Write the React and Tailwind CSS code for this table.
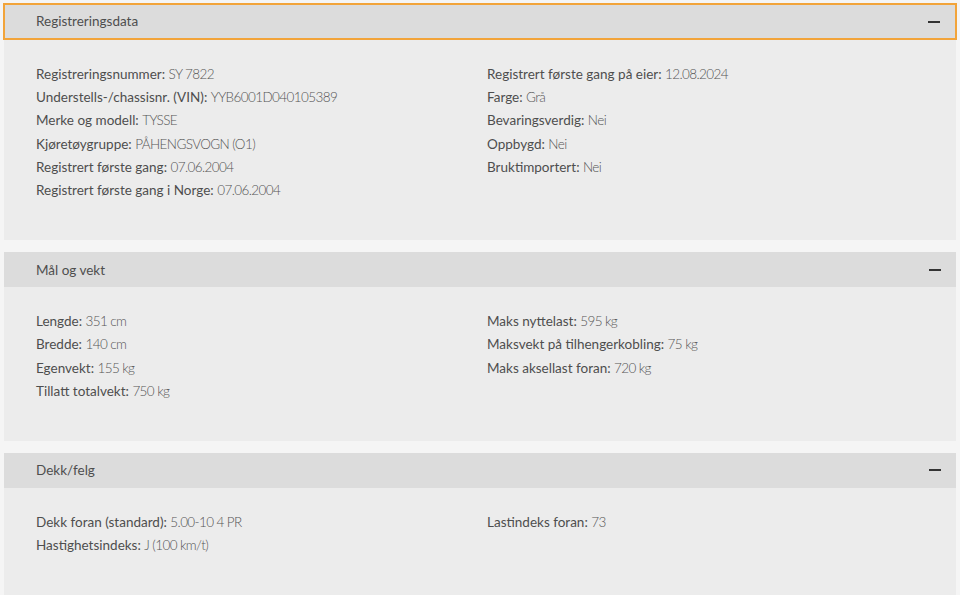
import React from "react";

const sections = [
  {
    title: "Registreringsdata",
    active: true,
    left: [
      ["Registreringsnummer", "SY 7822"],
      ["Understells-/chassisnr. (VIN)", "YYB6001D040105389"],
      ["Merke og modell", "TYSSE"],
      ["Kjøretøygruppe", "PÅHENGSVOGN (O1)"],
      ["Registrert første gang", "07.06.2004"],
      ["Registrert første gang i Norge", "07.06.2004"],
    ],
    right: [
      ["Registrert første gang på eier", "12.08.2024"],
      ["Farge", "Grå"],
      ["Bevaringsverdig", "Nei"],
      ["Oppbygd", "Nei"],
      ["Bruktimportert", "Nei"],
    ],
  },
  {
    title: "Mål og vekt",
    left: [
      ["Lengde", "351 cm"],
      ["Bredde", "140 cm"],
      ["Egenvekt", "155 kg"],
      ["Tillatt totalvekt", "750 kg"],
    ],
    right: [
      ["Maks nyttelast", "595 kg"],
      ["Maksvekt på tilhengerkobling", "75 kg"],
      ["Maks aksellast foran", "720 kg"],
    ],
  },
  {
    title: "Dekk/felg",
    left: [
      ["Dekk foran (standard)", "5.00-10 4 PR"],
      ["Hastighetsindeks", "J (100 km/t)"],
    ],
    right: [["Lastindeks foran", "73"]],
  },
];

function Row({ label, value }) {
  return (
    <div className="h-[23.2px] leading-[23px] whitespace-nowrap">
      <span className="text-[#4e4e4e]">{label}: </span>
      <span className="text-[#555] font-light tracking-[-0.6px]">{value}</span>
    </div>
  );
}

function Section({ section }) {
  return (
    <section className="bg-[#ececec]">
      <div
        className={
          "flex items-center justify-between bg-[#dcdcdc] h-[35px] pl-8 pr-[15px] " +
          (section.active ? "border-2 border-[#f2a43a] -mx-px -mt-px h-[37px] pl-[31px]" : "")
        }
      >
        <span className="text-[13.5px] text-[#4e4e4e]">{section.title}</span>
        <span className="block w-[12px] h-[2px] bg-[#333]" />
      </div>
      <div className="grid grid-cols-[451px_1fr] pl-8 pt-[23px] pb-[38px] text-[13.5px]">
        <div>
          {section.left.map(([l, v]) => (
            <Row key={l} label={l} value={v} />
          ))}
        </div>
        <div>
          {section.right.map(([l, v]) => (
            <Row key={l} label={l} value={v} />
          ))}
        </div>
      </div>
    </section>
  );
}

export default function App() {
  return (
    <div
      className="min-h-screen bg-[#f5f5f5] px-1 pt-1 flex flex-col gap-3"
      style={{ fontFamily: "Lato, 'Open Sans', sans-serif" }}
    >
      {sections.map((s) => (
        <Section key={s.title} section={s} />
      ))}
    </div>
  );
}
